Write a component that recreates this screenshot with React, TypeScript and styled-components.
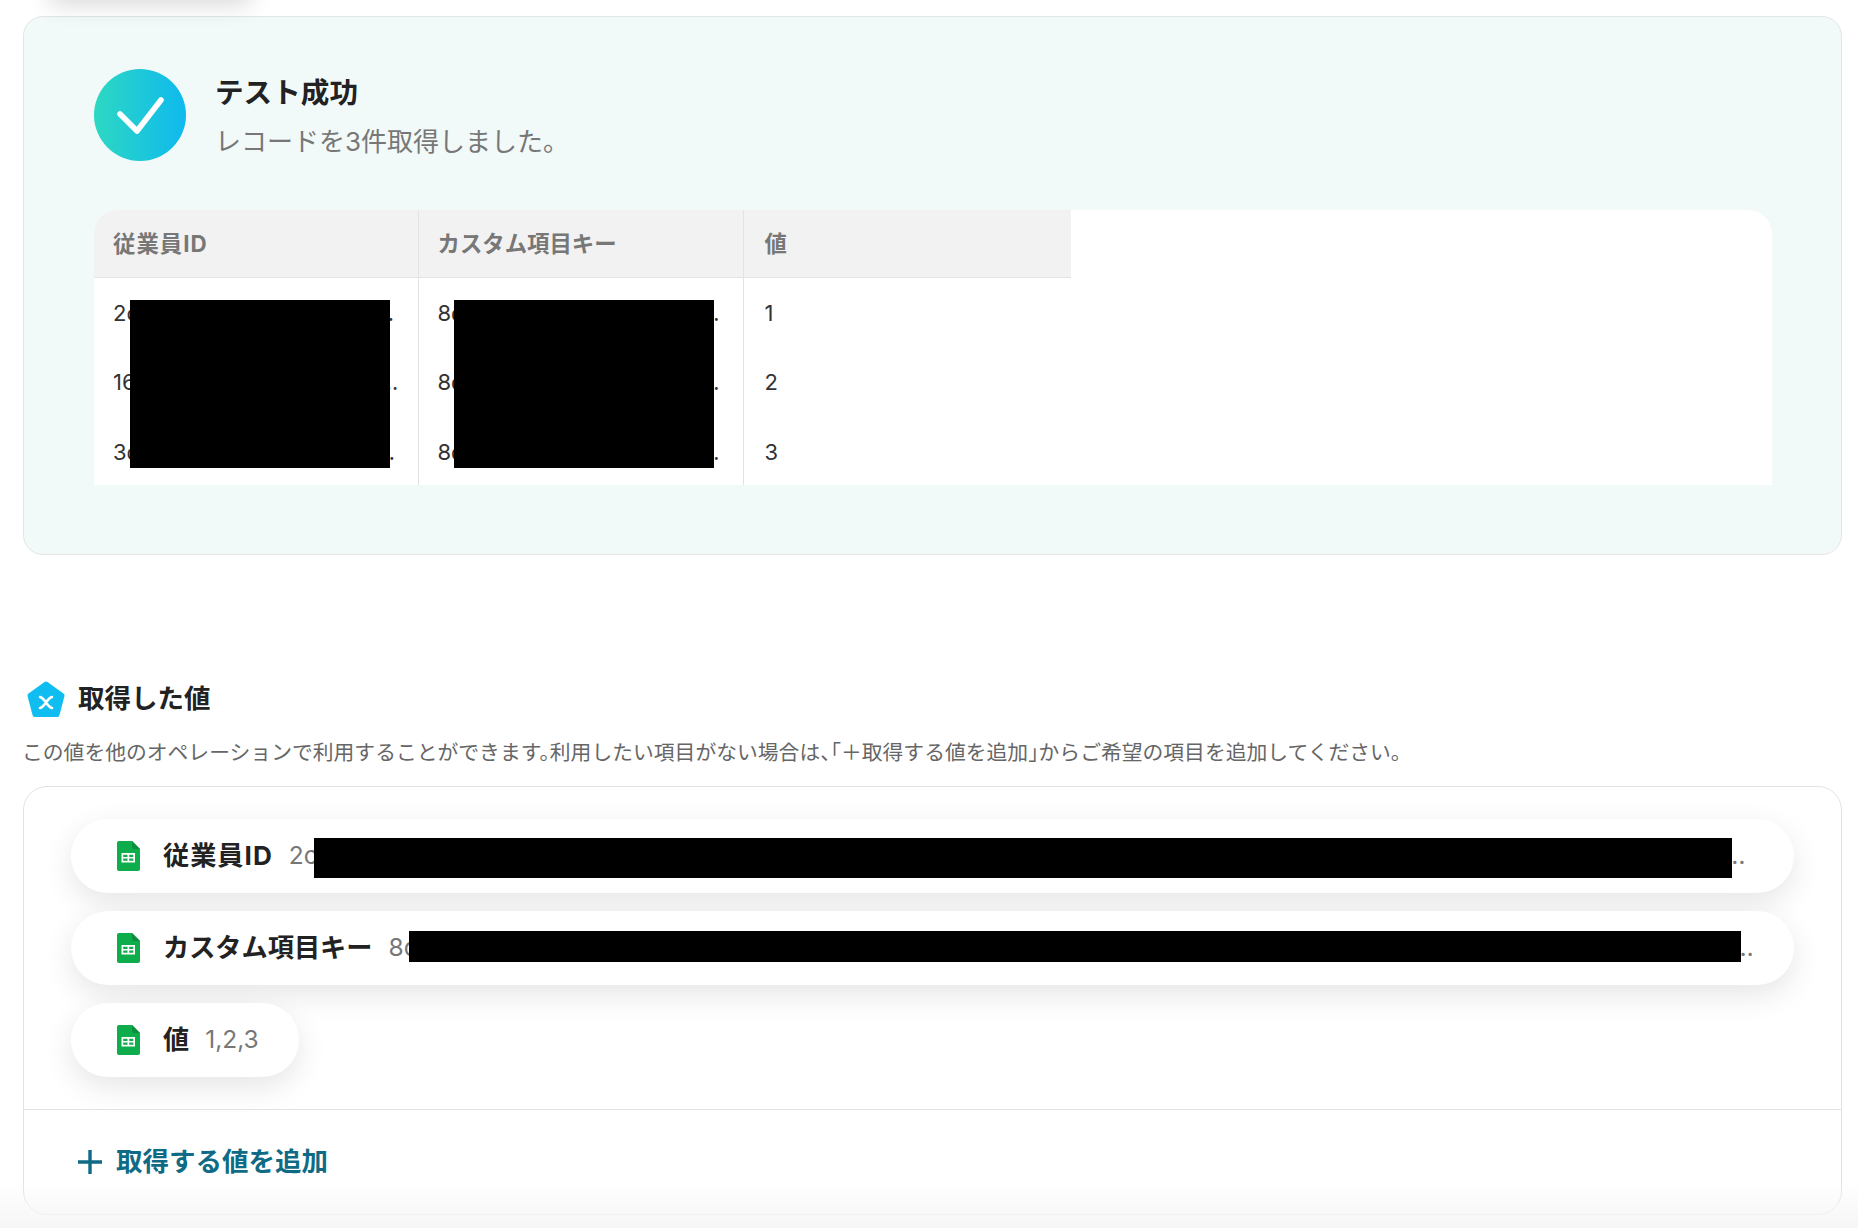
import styled, { createGlobalStyle } from "styled-components"

const GlobalStyle = createGlobalStyle`
  html, body {
    margin: 0;
    padding: 0;
    background: #ffffff;
  }
  body {
    font-family: Inter, "Noto Sans CJK JP", "Noto Sans", sans-serif;
    color: #222222;
  }
`

const Page = styled.div`
  position: relative;
  height: 1228px;
  overflow: hidden;
  box-sizing: border-box;
  padding: 16px 16px 0 23px;
`

const TopShadow = styled.div`
  position: absolute;
  top: -60px;
  left: 50px;
  width: 200px;
  height: 60px;
  box-shadow: 0 4px 24px rgba(0, 0, 0, 0.16);
`

const BottomFade = styled.div`
  position: absolute;
  left: 0;
  right: 0;
  bottom: 0;
  height: 46px;
  background: linear-gradient(180deg, rgba(246, 246, 246, 0), #f6f6f6);
  pointer-events: none;
`

const ResultPanel = styled.section`
  box-sizing: border-box;
  height: 539px;
  padding: 52px 69px 0 70px;
  background: #f2faf9;
  border: 1px solid #e3e6e6;
  border-radius: 20px;
`

const ResultHeader = styled.div`
  display: flex;
  align-items: center;
  gap: 29px;
`

const StatusCircle = styled.div`
  width: 92px;
  height: 92px;
  border-radius: 50%;
  background: linear-gradient(90deg, #2dd8c2, #0fb9ee);
  flex: none;
`

const ResultTitle = styled.h2`
  margin: 3px 0 11px;
  font-size: 28.6px;
  line-height: 40px;
  font-weight: 700;
  color: #222222;
`

const ResultText = styled.p`
  margin: 0;
  font-size: 26px;
  line-height: 36px;
  font-weight: 400;
  color: #777777;
`

const TableWrap = styled.div`
  position: relative;
  height: 275px;
  margin-top: 49px;
  background: #ffffff;
  border-radius: 24px 24px 0 0;
  overflow: hidden;
`

const Table = styled.table`
  width: 977px;
  height: 275px;
  table-layout: fixed;
  border-collapse: collapse;
`

const HeadCell = styled.th`
  box-sizing: border-box;
  height: 67px;
  padding: 0 19px 3px;
  background: #f2f2f2;
  border-bottom: 1px solid #e3e3e3;
  border-right: 1px solid #e3e3e3;
  font-size: 22.4px;
  font-weight: 700;
  color: #777777;
  text-align: left;
  &:last-child {
    border-right: none;
    padding-left: 21px;
  }
`

const BodyCell = styled.td`
  box-sizing: border-box;
  height: 69px;
  padding: 3px 12px 0 19px;
  border-right: 1px solid #e3e3e3;
  font-size: 22px;
  color: #333333;
  white-space: nowrap;
  overflow: hidden;
  text-overflow: ellipsis;
  &:last-child {
    border-right: none;
    padding-left: 21px;
  }
`

const Spaced = styled.span`
  letter-spacing: 1px;
`

const Redaction = styled.div<{ $left: number; $top: number; $width: number; $height: number }>`
  position: absolute;
  left: ${p => p.$left}px;
  top: ${p => p.$top}px;
  width: ${p => p.$width}px;
  height: ${p => p.$height}px;
  background: #000000;
`

const SectionHead = styled.div`
  display: flex;
  align-items: center;
  gap: 13px;
  margin: 126px 0 0 4px;
  height: 36px;
`

const SectionTitle = styled.h3`
  margin: 0;
  padding-bottom: 6px;
  font-size: 26.5px;
  font-weight: 700;
  color: #222222;
`

const SectionText = styled.p`
  margin: 21px 0 0 -1px;
  font-size: 20.8px;
  line-height: 30px;
  color: #666666;
  font-feature-settings: "halt";
  white-space: nowrap;
`

const ValuePanel = styled.section`
  box-sizing: border-box;
  height: 429px;
  margin-top: 18px;
  background: #ffffff;
  border: 1px solid #e3e3e3;
  border-radius: 24px;
  overflow: hidden;
`

const PillList = styled.div`
  box-sizing: border-box;
  height: 323px;
  padding: 32px 47px 0 47px;
  display: flex;
  flex-direction: column;
  align-items: flex-start;
  gap: 18px;
  border-bottom: 1px solid #e3e3e3;
`

const Pill = styled.div<{ $wide?: boolean; $endPad: number }>`
  position: relative;
  box-sizing: border-box;
  width: ${p => (p.$wide ? "100%" : "auto")};
  height: 74px;
  padding: 0 ${p => p.$endPad}px 0 46px;
  display: flex;
  align-items: center;
  background: #ffffff;
  border-radius: 37px;
  box-shadow: 0 10px 30px rgba(0, 0, 0, 0.1);
`

const PillLabel = styled.span`
  margin-left: 23px;
  padding-bottom: 5px;
  font-size: 26.2px;
  font-weight: 700;
  color: #222222;
  white-space: nowrap;
  flex: none;
`

const PillValue = styled.span`
  margin-left: 16px;
  padding-bottom: 2px;
  font-size: 24.5px;
  color: #777777;
  white-space: nowrap;
  overflow: hidden;
  text-overflow: ellipsis;
  min-width: 0;
`

const AddRow = styled.div`
  display: flex;
  align-items: center;
  gap: 14px;
  height: 104px;
  padding-left: 54px;
  font-size: 26.5px;
  font-weight: 700;
  color: #0f6b85;
`

const AddLabel = styled.span`
  padding-bottom: 5px;
`

function CheckIcon() {
  return (
    <svg width="92" height="92" viewBox="0 0 92 92" fill="none">
      <path d="M26 45 L43 62 L67 31" stroke="#ffffff" strokeWidth="5.6" strokeLinecap="round" strokeLinejoin="round" />
    </svg>
  )
}

function ValueIcon() {
  return (
    <svg width="38" height="36" viewBox="0 0 38 36" fill="none">
      <path d="M19 3 L35 14.5 L30 33.5 L8 33.5 L3 14.5 Z" fill="#10bdf0" stroke="#10bdf0" strokeWidth="5" strokeLinejoin="round" />
      <path d="M13 16 C18 17 20 26 25 27 M25 16 C20 17 18 26 13 27" stroke="#ffffff" strokeWidth="2.6" strokeLinecap="round" />
    </svg>
  )
}

function SheetIcon() {
  return (
    <svg width="23" height="30" viewBox="0 0 23 30" style={{ flex: "none" }}>
      <path d="M2 0 H15 L23 8 V28 C23 29.2 22.2 30 21 30 H2 C0.8 30 0 29.2 0 28 V2 C0 0.8 0.8 0 2 0 Z" fill="#0ead4b" />
      <path d="M15 0 L23 8 H17 C15.8 8 15 7.2 15 6 Z" fill="#0a8f3c" />
      <path d="M4.5 12 H18 V21.5 H4.5 Z M6.2 13.7 V16 H10.5 V13.7 Z M12.2 13.7 V16 H16.3 V13.7 Z M6.2 17.5 V19.8 H10.5 V17.5 Z M12.2 17.5 V19.8 H16.3 V17.5 Z" fill="#ffffff" fillRule="evenodd" />
    </svg>
  )
}

function PlusIcon() {
  return (
    <svg width="24" height="24" viewBox="0 0 24 24" fill="none">
      <path d="M12 0 V24 M0 12 H24" stroke="#0f6b85" strokeWidth="3.4" />
    </svg>
  )
}

const filler = "0".repeat(120)

const rows = [
  ["2c" + filler, "8d" + filler, "1"],
  ["16W" + filler, "8d" + filler, "2"],
  ["3d" + filler, "8d" + filler, "3"],
]

export default function App() {
  return (
    <>
      <GlobalStyle />
      <Page>
        <TopShadow />
        <ResultPanel>
          <ResultHeader>
            <StatusCircle>
              <CheckIcon />
            </StatusCircle>
            <div>
              <ResultTitle>テスト成功</ResultTitle>
              <ResultText>レコードを3件取得しました。</ResultText>
            </div>
          </ResultHeader>
          <TableWrap>
            <Table>
              <colgroup>
                <col style={{ width: 324 }} />
                <col style={{ width: 325 }} />
                <col style={{ width: 328 }} />
              </colgroup>
              <thead>
                <tr>
                  <HeadCell><Spaced>従業員ID</Spaced></HeadCell>
                  <HeadCell>カスタム項目キー</HeadCell>
                  <HeadCell>値</HeadCell>
                </tr>
              </thead>
              <tbody>
                {rows.map(row => (
                  <tr key={row[2]}>
                    {row.map((cell, i) => (
                      <BodyCell key={i}>{cell}</BodyCell>
                    ))}
                  </tr>
                ))}
              </tbody>
            </Table>
            <Redaction $left={36} $top={90} $width={260} $height={168} />
            <Redaction $left={360} $top={90} $width={260} $height={168} />
          </TableWrap>
        </ResultPanel>

        <SectionHead>
          <ValueIcon />
          <SectionTitle>取得した値</SectionTitle>
        </SectionHead>
        <SectionText>この値を他のオペレーションで利用することができます。利用したい項目がない場合は、「＋取得する値を追加」からご希望の項目を追加してください。</SectionText>

        <ValuePanel>
          <PillList>
            <Pill $wide $endPad={37}>
              <SheetIcon />
              <PillLabel><Spaced>従業員ID</Spaced></PillLabel>
              <PillValue>{"2c" + filler}</PillValue>
              <Redaction $left={243} $top={19} $width={1418} $height={40} />
            </Pill>
            <Pill $wide $endPad={30}>
              <SheetIcon />
              <PillLabel>カスタム項目キー</PillLabel>
              <PillValue>{"8d" + filler}</PillValue>
              <Redaction $left={338} $top={20} $width={1332} $height={31} />
            </Pill>
            <Pill $endPad={40}>
              <SheetIcon />
              <PillLabel>値</PillLabel>
              <PillValue>1,2,3</PillValue>
            </Pill>
          </PillList>
          <AddRow>
            <PlusIcon />
            <AddLabel>取得する値を追加</AddLabel>
          </AddRow>
        </ValuePanel>
        <BottomFade />
      </Page>
    </>
  )
}
